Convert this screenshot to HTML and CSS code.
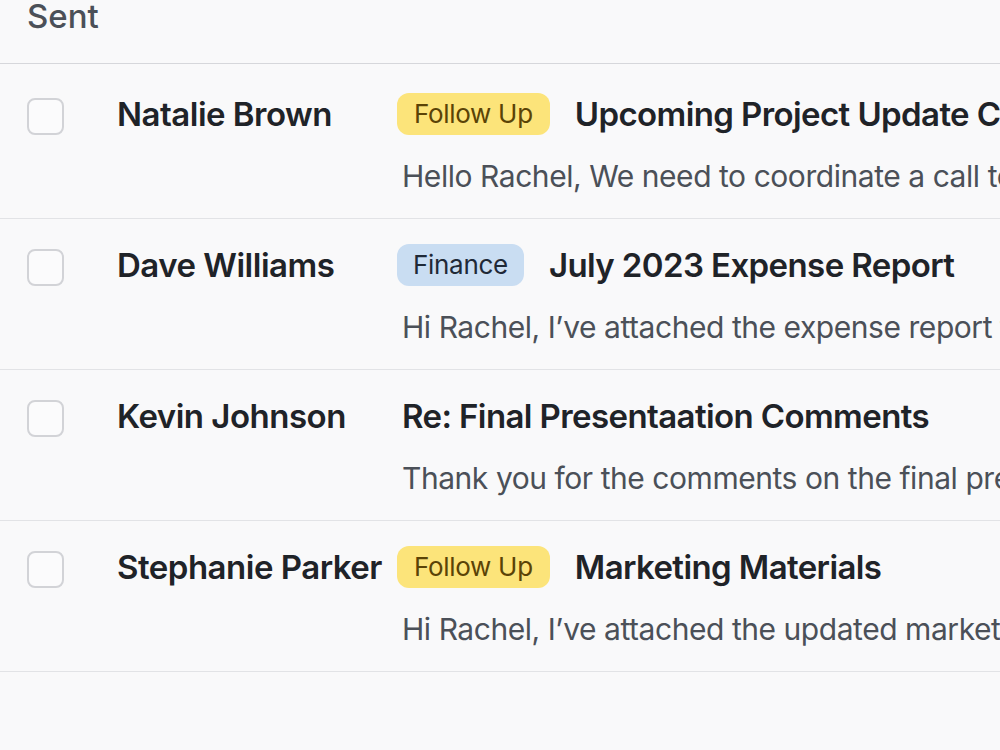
FILE: index.html
```html
<!DOCTYPE html>
<html lang="en">
<head>
<meta charset="utf-8">
<title>Sent</title>
<link rel="stylesheet" href="styles.css">
</head>
<body>
<div class="page">
  <header class="header"><h1 class="title">Sent</h1></header>
  <ul class="list">
    <li class="row">
      <span class="check"></span>
      <span class="name">Natalie Brown</span>
      <div class="content">
        <div class="line">
          <span class="badge badge-yellow">Follow Up</span>
          <span class="subject">Upcoming Project Update Call</span>
        </div>
        <p class="preview">Hello Rachel, We need to coordinate a call to discuss the project timeline</p>
      </div>
    </li>
    <li class="row">
      <span class="check"></span>
      <span class="name">Dave Williams</span>
      <div class="content">
        <div class="line">
          <span class="badge badge-blue">Finance</span>
          <span class="subject">July 2023 Expense Report</span>
        </div>
        <p class="preview">Hi Rachel, I’ve attached the expense report for July 2023</p>
      </div>
    </li>
    <li class="row">
      <span class="check"></span>
      <span class="name">Kevin Johnson</span>
      <div class="content">
        <div class="line">
          <span class="subject">Re: Final Presentaation Comments</span>
        </div>
        <p class="preview">Thank you for the comments on the final presentation</p>
      </div>
    </li>
    <li class="row">
      <span class="check"></span>
      <span class="name">Stephanie Parker</span>
      <div class="content">
        <div class="line">
          <span class="badge badge-yellow">Follow Up</span>
          <span class="subject">Marketing Materials</span>
        </div>
        <p class="preview">Hi Rachel, I’ve attached the updated marketing materials</p>
      </div>
    </li>
  </ul>
</div>
</body>
</html>
```
FILE: styles.css
```css
* { box-sizing: border-box; }
html, body {
  margin: 0;
  padding: 0;
  background: #f9f9fa;
}
body {
  font-family: Inter, "Noto Sans", "Liberation Sans", sans-serif;
  color: #1f2328;
  overflow: hidden;
  width: 1000px;
  height: 750px;
}
.page { width: 1000px; }
.header {
  height: 64px;
  border-bottom: 1px solid #d6d7db;
  padding-left: 27px;
  display: flex;
  align-items: flex-start;
}
.title {
  margin: 0;
  font-size: 33px;
  font-weight: 500;
  color: #4b5058;
  line-height: 36px;
  margin-top: -2px;
}
.list {
  list-style: none;
  margin: 0;
  padding: 4px 0 0 0;
}
.row {
  display: flex;
  align-items: flex-start;
  height: 151px;
  border-bottom: 1px solid #e2e3e6;
  padding: 24px 0 0 27px;
  white-space: nowrap;
}
.check {
  flex: none;
  width: 37px;
  height: 37px;
  margin-top: 6px;
  border: 2px solid #d2d3d7;
  border-radius: 8px;
  background: #fbfbfc;
}
.name {
  flex: none;
  width: 280px;
  margin-left: 53px;
  font-size: 33px;
  font-weight: 600;
  line-height: 44px;
  color: #1f2328;
  letter-spacing: -0.5px;
}
.content {
  flex: 1;
  min-width: 0;
}
.line {
  display: flex;
  align-items: center;
  gap: 25px;
  height: 44px;
}
.badge {
  flex: none;
  height: 42px;
  line-height: 42px;
  padding: 0 17px;
  border-radius: 12px;
  font-size: 26px;
  font-weight: 400;
  letter-spacing: -0.3px;
}
.badge-yellow {
  background: #fce47a;
  color: #5a4306;
}
.badge-blue {
  background: #c9ddf2;
  color: #1f2937;
  padding: 0 16px;
}
.subject {
  font-size: 33px;
  font-weight: 600;
  color: #1f2328;
  letter-spacing: -0.6px;
  padding-left: 5px;
}
.line .badge + .subject { padding-left: 0; }
.preview {
  margin: 20px 0 0 5px;
  font-size: 30px;
  line-height: 40px;
  color: #4b5058;
  letter-spacing: -0.45px;
}
```
